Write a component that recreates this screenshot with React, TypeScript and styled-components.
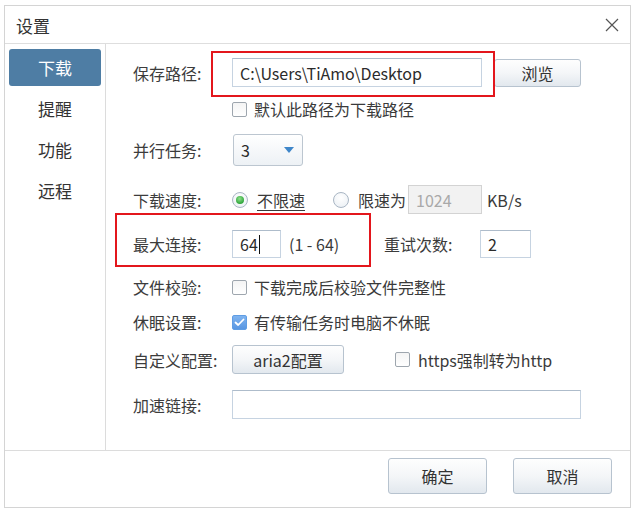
import React from "react";
import styled, { createGlobalStyle, css } from "styled-components";

const GlobalStyle = createGlobalStyle`
  html, body { margin: 0; padding: 0; background: #ffffff; }
  body {
    font-family: "Noto Sans CJK SC", "Noto Sans", "Liberation Sans", sans-serif;
    color: #3a3a3a;
  }
  * { box-sizing: border-box; }
`;

const Window = styled.div`
  position: relative;
  margin: 5px 0 0 4px;
  width: 627px;
  height: 503px;
  border: 1px solid #d4d4d4;
  background: #fff;
  display: flex;
  flex-direction: column;
`;

const TitleBar = styled.div`
  height: 38px;
  border-bottom: 1px solid #dedede;
  display: flex;
  align-items: center;
  justify-content: space-between;
  padding: 0 10px 0 11px;
`;

const Title = styled.span`
  font-size: 17px;
  color: #333;
  line-height: 1;
  margin-top: 1px;
`;

const CloseButton = styled.button`
  border: 0;
  background: transparent;
  padding: 0;
  width: 16px;
  height: 16px;
  display: flex;
  align-items: center;
  justify-content: center;
  margin-top: 1px;
`;

const Main = styled.div`
  height: 406px;
  display: flex;
`;

const Sidebar = styled.nav`
  width: 101px;
  border-right: 1px solid #dcdcdc;
  padding: 5px 0 0 4px;
  display: flex;
  flex-direction: column;
  gap: 4px;
`;

const NavItem = styled.div<{ $active?: boolean }>`
  width: 92px;
  height: 37px;
  border-radius: 3px;
  display: flex;
  align-items: center;
  justify-content: center;
  font-size: 17px;
  color: #333;
  ${(p) =>
    p.$active &&
    css`
      background: #4e7da4;
      color: #fff;
    `}
`;

const Content = styled.div`
  flex: 1;
  padding: 14px 0 0 27px;
  display: flex;
  flex-direction: column;
`;

const Row = styled.div<{ $h: number; $mt?: number }>`
  height: ${(p) => p.$h}px;
  margin-top: ${(p) => p.$mt ?? 0}px;
  display: flex;
  align-items: center;
  font-size: 16px;
  white-space: nowrap;
`;

const Label = styled.span<{ $w?: number }>`
  width: ${(p) => p.$w ?? 99}px;
  flex: none;
  color: #3c3c3c;
`;

const TextInput = styled.div<{ $w: number; $h?: number; $disabled?: boolean }>`
  width: ${(p) => p.$w}px;
  height: ${(p) => p.$h ?? 29}px;
  flex: none;
  border: 1px solid #c6d3e1;
  border-top-color: #aebccb;
  background: #fff;
  display: flex;
  align-items: center;
  padding-left: 7px;
  font-size: 16px;
  color: #2b2b2b;
  ${(p) =>
    p.$disabled &&
    css`
      background: #f2f2f2;
      border-color: #d3d3d3;
      color: #a9a9a9;
    `}
`;

const Caret = styled.span`
  display: inline-block;
  width: 1px;
  height: 19px;
  background: #111;
  margin-left: 1px;
`;

const Button = styled.button<{ $w: number; $h: number; $ml?: number }>`
  width: ${(p) => p.$w}px;
  height: ${(p) => p.$h}px;
  margin-left: ${(p) => p.$ml ?? 0}px;
  flex: none;
  border: 1px solid #b7c3cf;
  border-radius: 3px;
  background: linear-gradient(#fefefe 0%, #f4f6f8 50%, #e2e8ee 100%);
  font-family: inherit;
  font-size: 16px;
  color: #333;
  padding: 0;
  display: flex;
  align-items: center;
  justify-content: center;
`;

const Box = styled.span<{ $checked?: boolean }>`
  width: 15px;
  height: 15px;
  flex: none;
  border: 1px solid #9ea6ae;
  border-radius: 2px;
  background: linear-gradient(#f4f4f4, #ffffff);
  display: flex;
  align-items: center;
  justify-content: center;
  ${(p) =>
    p.$checked &&
    css`
      border-color: #5f9de4;
      background: linear-gradient(#7fb4f0, #5896e2);
    `}
`;

const CheckLabel = styled.span<{ $gap?: number }>`
  margin-left: ${(p) => p.$gap ?? 7}px;
`;

const RadioCircle = styled.span<{ $checked?: boolean }>`
  width: 16px;
  height: 16px;
  flex: none;
  border-radius: 50%;
  border: 1px solid #a9b6c4;
  background: radial-gradient(circle at 50% 35%, #ffffff, #e9eef3);
  display: flex;
  align-items: center;
  justify-content: center;
  &::after {
    content: "";
    display: ${(p) => (p.$checked ? "block" : "none")};
    width: 8px;
    height: 8px;
    border-radius: 50%;
    background: radial-gradient(circle at 45% 35%, #8fe08a, #2fa63c 70%);
  }
`;

const RadioText = styled.span<{ $underline?: boolean; $ml: number }>`
  margin-left: ${(p) => p.$ml}px;
  text-decoration: ${(p) => (p.$underline ? "underline" : "none")};
  text-underline-offset: 3px;
`;

const Spaced = styled.span<{ $ml?: number; $w?: number }>`
  margin-left: ${(p) => p.$ml ?? 0}px;
  ${(p) => (p.$w ? `width: ${p.$w}px; flex: none;` : "")}
`;

const Select = styled.div`
  width: 70px;
  height: 32px;
  margin-left: 1px;
  flex: none;
  border: 1px solid #bcc6d0;
  border-radius: 3px;
  background: linear-gradient(#ffffff, #edf1f5);
  display: flex;
  align-items: center;
  justify-content: space-between;
  padding: 0 8px 0 7px;
  font-size: 16px;
  color: #2b2b2b;
`;

const Footer = styled.div`
  flex: 1;
  border-top: 1px solid #dcdcdc;
  display: flex;
  justify-content: flex-end;
  align-items: flex-start;
  gap: 26px;
  padding: 7px 18px 0 0;
`;

const Highlight = styled.div<{ $l: number; $t: number; $w: number; $h: number }>`
  position: absolute;
  left: ${(p) => p.$l}px;
  top: ${(p) => p.$t}px;
  width: ${(p) => p.$w}px;
  height: ${(p) => p.$h}px;
  border: 2px solid #e3161c;
  pointer-events: none;
`;

const Check = () => (
  <svg width="11" height="9" viewBox="0 0 11 9">
    <polyline points="1.5,4.5 4.2,7 9.5,1.5" fill="none" stroke="#fff" strokeWidth="1.8" strokeLinecap="round" strokeLinejoin="round" />
  </svg>
);

export default function App() {
  return (
    <>
      <GlobalStyle />
      <Window>
        <TitleBar>
          <Title>设置</Title>
          <CloseButton aria-label="关闭">
            <svg width="14" height="14" viewBox="0 0 14 14">
              <path d="M1 1 L13 13 M13 1 L1 13" stroke="#555" strokeWidth="1.2" fill="none" />
            </svg>
          </CloseButton>
        </TitleBar>
        <Main>
          <Sidebar>
            <NavItem $active>下载</NavItem>
            <NavItem>提醒</NavItem>
            <NavItem>功能</NavItem>
            <NavItem>远程</NavItem>
          </Sidebar>
          <Content>
            <Row $h={29}>
              <Label>保存路径:</Label>
              <TextInput $w={250}>C:\Users\TiAmo\Desktop</TextInput>
              <Button $w={87} $h={28} $ml={12}>浏览</Button>
            </Row>
            <Row $h={20} $mt={12}>
              <Label />
              <Box />
              <CheckLabel>默认此路径为下载路径</CheckLabel>
            </Row>
            <Row $h={32} $mt={15}>
              <Label>并行任务:</Label>
              <Select>
                <span>3</span>
                <svg width="10" height="6" viewBox="0 0 10 6">
                  <path d="M0 0 L10 0 L5 6 Z" fill="#3f86c9" />
                </svg>
              </Select>
            </Row>
            <Row $h={29} $mt={19}>
              <Label>下载速度:</Label>
              <RadioCircle $checked />
              <RadioText $ml={9} $underline>不限速</RadioText>
              <Spaced $ml={28} as={RadioCircle} />
              <RadioText $ml={9}>限速为</RadioText>
              <Spaced $ml={2} as="span" />
              <TextInput $w={74} $h={29} $disabled>1024</TextInput>
              <Spaced $ml={5}>KB/s</Spaced>
            </Row>
            <Row $h={28} $mt={16}>
              <Label>最大连接:</Label>
              <TextInput $w={49} $h={28}>
                64<Caret />
              </TextInput>
              <Spaced $ml={8} $w={95}>(1 - 64)</Spaced>
              <Label $w={96}>重试次数:</Label>
              <TextInput $w={51} $h={28}>2</TextInput>
            </Row>
            <Row $h={20} $mt={19}>
              <Label>文件校验:</Label>
              <Box />
              <CheckLabel>下载完成后校验文件完整性</CheckLabel>
            </Row>
            <Row $h={20} $mt={15}>
              <Label>休眠设置:</Label>
              <Box $checked>
                <Check />
              </Box>
              <CheckLabel>有传输任务时电脑不休眠</CheckLabel>
            </Row>
            <Row $h={29} $mt={13}>
              <Label>自定义配置:</Label>
              <Button $w={112} $h={29}>aria2配置</Button>
              <Spaced $ml={51} />
              <Box />
              <CheckLabel $gap={8}>https强制转为http</CheckLabel>
            </Row>
            <Row $h={29} $mt={16}>
              <Label>加速链接:</Label>
              <TextInput $w={349} />
            </Row>
          </Content>
        </Main>
        <Footer>
          <Button $w={99} $h={36}>确定</Button>
          <Button $w={99} $h={36}>取消</Button>
        </Footer>
        <Highlight $l={206} $t={45} $w={284} $h={46} />
        <Highlight $l={110} $t={207} $w={256} $h={54} />
      </Window>
    </>
  );
}
